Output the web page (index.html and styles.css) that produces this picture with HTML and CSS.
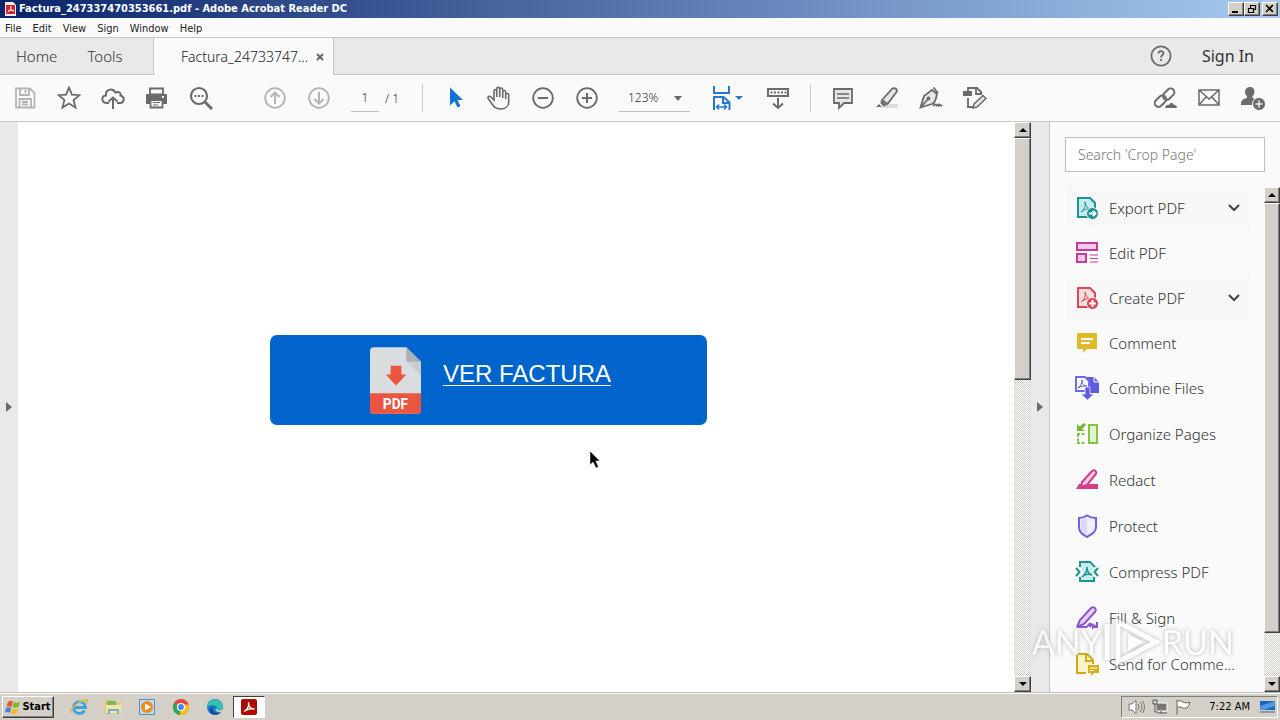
FILE: index.html
```
<!DOCTYPE html>
<html lang="en">
<head>
    <meta charset="UTF-8">
    <meta name="viewport" content="width=device-width, initial-scale=1.0">
    <title>Factura_247337470353661.pdf - Adobe Acrobat Reader DC</title>
    <link rel="stylesheet" href="styles.css">
</head>
<body>
    <header class="title-bar">
        <svg class="app-icon" width="11" height="14" viewBox="0 0 11 14"><path d="M0 0h8l3 3v11H0z" fill="#f4f0f0"/><path d="M1 3h9v9H1z" fill="#e02020"/><path d="M5.500 4c1 2-1 5-3 6.500M5.500 5c0 2 2 4 3.500 4M3 9c2-1 4-1 6 0" stroke="#fff" fill="none"/></svg>
        <h1>Factura_247337470353661.pdf - Adobe Acrobat Reader DC</h1>
        <div class="window-buttons">
            <button aria-label="Minimize"><svg width="10" height="10"><path d="M1 8h6" stroke="#000" stroke-width="2"/></svg></button>
            <button aria-label="Restore"><svg width="10" height="10"><path d="M3 1.500h6M3.500 1v3M8.500 1v5M7 5.500h2M1 4.500h6M1.500 4v5M6.500 4v5M1 8.500h6" stroke="#000" stroke-width="1.200"/></svg></button>
            <button class="close" aria-label="Close"><svg width="10" height="10"><path d="M1 1l7 7M8 1l-7 7" stroke="#000" stroke-width="1.600"/></svg></button>
        </div>
    </header>

    <nav class="menu-bar">
        <a href="#">File</a>
        <a href="#">Edit</a>
        <a href="#">View</a>
        <a href="#">Sign</a>
        <a href="#">Window</a>
        <a href="#">Help</a>
    </nav>

    <div class="tab-bar">
        <div class="tabs-left">
            <a href="#">Home</a>
            <a href="#">Tools</a>
        </div>
        <div class="tab-active">
            <span>Factura_24733747...</span>
            <button aria-label="Close tab"><svg width="8" height="8"><path d="M1 1l6 6M7 1l-6 6" stroke="#666" stroke-width="2"/></svg></button>
        </div>
        <div class="tabs-right">
            <button class="help" aria-label="Help"><svg width="22" height="22" viewBox="0 0 22 22" fill="none" stroke="#6b6b6b" stroke-width="1.800"><circle cx="11" cy="11" r="9.600"/><path d="M8.500 8.500c.2-3 5-3 5-.2 0 2-2.500 2-2.500 4.200M11 14v2"/></svg></button>
            <a href="#">Sign In</a>
        </div>
    </div>

    <div class="toolbar">
        <div class="group">
            <button aria-label="Save"><svg class="dim" viewBox="0 0 24 24"><path d="M3 2.500h14l4.500 4.500v14.500H3z"/><path d="M7 3v6h9V3M12.500 4v3M6.500 21v-8h11.500v8M9 16h6M9 18.500h6"/></svg></button>
            <button aria-label="Star"><svg viewBox="0 0 24 24"><path d="M12 1.500l2.900 7.200 7.600.5-5.900 4.900 1.900 7.500-6.500-4.100-6.500 4.100 1.900-7.500L1.500 9.200l7.600-.5z"/></svg></button>
            <button aria-label="Upload"><svg viewBox="0 0 24 24"><path stroke-width="2" d="M8 17H6c-6 0-6-7-1-7.500C4 4 11 1 14.500 6.500 18 5 20 7 19.500 9.500 24.500 11 23 17 19 17h-3M12 23V12M7.500 15.500L12 11.500l4.500 4"/></svg></button>
            <button aria-label="Print"><svg viewBox="0 0 24 24"><path d="M5 2.500h13v6H5z" fill="#fafafa"/><path d="M2 8h19q1 0 1 1v9h-4v-4H5v4H1V9q0-1 1-1z" fill="#6b6b6b" stroke="none"/><path d="M5.500 14h12v7.500h-12z" fill="#fafafa"/><path d="M8 16.500h7M8 19h5" stroke-width="1.200"/><path d="M17 11h2" stroke="#fff"/></svg></button>
            <button aria-label="Find"><svg viewBox="0 0 24 24"><circle cx="10" cy="10" r="8" stroke-width="2.200"/><path d="M16 16l7 7" stroke-width="3"/><path d="M5.500 10h9" stroke-width="2" stroke-dasharray="2 1.500"/></svg></button>
        </div>
        <div class="group paging">
            <button aria-label="Previous page"><svg class="dim" viewBox="0 0 24 24"><circle cx="12" cy="12" r="9.800"/><path d="M12 18V7M7.500 11L12 6.500l4.500 4.500" stroke-width="2"/></svg></button>
            <button aria-label="Next page"><svg class="dim" viewBox="0 0 24 24"><circle cx="12" cy="12" r="9.800"/><path d="M12 6v11M7.500 13l4.500 4.500 4.500-4.500" stroke-width="2"/></svg></button>
        </div>
        <div class="page-number">
            <input id="page" type="text" value="1">
            <label for="page">/ 1</label>
        </div>
        <div class="separator"></div>
        <div class="group">
            <button aria-label="Select"><svg viewBox="0 0 24 24"><path d="M7 1.500v18l4.500-4.200 3 6.200 3-1.500-3-6H20z" fill="#1473d2" stroke="none"/></svg></button>
            <button aria-label="Hand"><svg viewBox="0 0 24 24"><path d="M7 14V5c0-2 2.700-2 2.700 0v6V3c0-2.200 3-2.200 3 0v8-7.500c0-2 3-2 3 0V12 6c0-2 3-2 3 0v7-4c0-2 3-2 3 0v7c0 4-3 7-8 7-5.700 0-7.700-3.500-9.700-6.500L1.500 13c-1.500-2.500 1-3.500 2.500-2z" stroke-width="1.600"/></svg></button>
            <button aria-label="Zoom out"><svg viewBox="0 0 24 24"><circle cx="12" cy="12" r="9.800"/><path d="M7 12h10" stroke-width="2"/></svg></button>
            <button aria-label="Zoom in"><svg viewBox="0 0 24 24"><circle cx="12" cy="12" r="9.800"/><path d="M7 12h10M12 7v10" stroke-width="2"/></svg></button>
        </div>
        <div class="zoom-box">
            <select aria-label="Zoom level">
                <option>123%</option>
            </select>
        </div>
        <button class="fit" aria-label="Fit width"><svg class="blue" viewBox="0 0 24 24"><path stroke-width="2" d="M4 0v7h15V0M4 24V11h9.500l6 5.500V24M13 11v6h6"/><path d="M6.500 21h10M9 18.500L6.500 21 9 23.500M14 18.500l2.500 2.500-2.500 2.500" stroke-width="1.500"/></svg><span class="caret"></span></button>
        <button aria-label="Reading mode"><svg viewBox="0 0 24 24"><path d="M2 3h20v7H2zM12 12v10M7 17.500l5 4.500 5-4.500" stroke-width="2"/><path d="M4.500 6.500h16" stroke-dasharray="2 1.500"/></svg></button>
        <div class="separator"></div>
        <div class="group">
            <button aria-label="Comment"><svg viewBox="0 0 24 24"><path d="M3 3h18v14h-8l-5 5v-5H3z" fill="#e6e6e6"/><path d="M6 8h12M6 12h12" stroke-width="1.300"/></svg></button>
            <button aria-label="Highlight"><svg viewBox="0 0 24 24"><path d="M8 18h15v4H6z" fill="#ddd" stroke="none"/><path d="M7 14L17 3c2.500-2 6 0 4.500 3l-9 12z" fill="#e6e6e6"/><path d="M6 14l6 5-3 1.500-3.500-3zM4 18l3 3H1z" fill="#6b6b6b" stroke="none"/></svg></button>
            <button aria-label="Sign"><svg viewBox="0 0 24 24"><path d="M14.500 1.500L19 7M13 4L5 10 1.500 21.500 13 18c4-2 4-6 5-10zM2 21l7-8" fill="#e6e6e6"/><circle cx="9.500" cy="12.500" r="1"/><path d="M14 20c3-4 3 1 4-1s1 3 2 0c1-2 1 2 3 0"/></svg></button>
            <button aria-label="Edit"><svg viewBox="0 0 24 24"><path d="M5 5V2h9l5 5M13 2v6h6M5 12v9h5"/><path d="M0 5h9v5H0z" fill="#6b6b6b" stroke="none"/><path d="M10 22l1-4L20 9.500l3 3L14 21z" fill="#e6e6e6" stroke-width="1.500"/></svg></button>
        </div>
        <div class="group share">
            <button aria-label="Share link"><svg viewBox="0 0 24 24"><rect x="9" y="4.500" width="13" height="7.500" rx="3.700" transform="rotate(-45 15.500 8)" stroke-width="2"/><rect x="1" y="11" width="13" height="7.500" rx="3.700" transform="rotate(-45 8 15)" stroke-width="2"/><path d="M12 22.500c-1-4 3-4 4-4 2-4 5-1 5 0 4 0 4 4 2 4z" fill="#6b6b6b" stroke="#fafafa" stroke-width="1"/></svg></button>
            <button aria-label="Email"><svg viewBox="0 0 24 24"><path d="M2 4h20v15H2zM2 4l10 9L22 4M2 19l7-8M22 19l-7-8" stroke-width="1.500"/></svg></button>
            <button aria-label="Add person"><svg viewBox="0 0 24 24"><path d="M9 1c6 0 5 8 2.500 9v2c2 1 5 1 6 5v2H0c0-6 3-6 6-7v-2C3 8 3 1 9 1z" fill="#6b6b6b" stroke="none"/><circle cx="18" cy="18" r="6.500" fill="#6b6b6b" stroke="#fafafa" stroke-width="1"/><path d="M14.500 18h7M18 14.500v7" stroke="#eee" stroke-width="1.500"/></svg></button>
        </div>
    </div>

    <main class="workspace">
        <button class="side-strip" aria-label="Show navigation pane"><span class="arrow"></span></button>
        <section class="document">
            <a class="invoice-btn" href="#">
                <svg width="51" height="67" viewBox="0 0 52 68"><path d="M4 0h33l15 15v49q0 4-4 4H4q-4 0-4-4V4q0-4 4-4z" fill="#dadde0"/><path d="M37 15h15v14z" fill="#c9cdd2"/><path d="M37 0l15 15H40q-3 0-3-3z" fill="#a9b0b8"/><path d="M0 47h52v17q0 4-4 4H4q-4 0-4-4z" fill="#ea5640"/><path d="M21 19h11v9h5L26.500 39 16 28h5z" fill="#ee553d"/><text class="pdf-label" x="26" y="63" text-anchor="middle">PDF</text></svg>
                <span>VER FACTURA</span>
            </a>
            <svg class="cursor" width="12" height="19" viewBox="0 0 12 19"><path d="M1 1v14l3-3 3 6 2.500-1-2.700-6H11z" fill="#000" stroke="#fff" stroke-width=".5"/></svg>
        </section>
        <div class="scrollbar">
            <button aria-label="Scroll up"><span class="up"></span></button>
            <div class="track"><div class="thumb doc-thumb"></div></div>
            <button aria-label="Scroll down"><span class="down"></span></button>
        </div>
        <button class="side-strip" aria-label="Hide tools pane"><span class="arrow"></span></button>
        <aside class="tools-pane">
            <div class="search">
                <input type="text" placeholder="Search 'Crop Page'" aria-label="Search tools">
            </div>
            <div class="tools-body">
                <ul class="tools">
                    <li class="short shaded"><a href="#"><svg viewBox="0 0 24 24" stroke="#1c9490"><path d="M3 2h12l5 5v14H3z" fill="#c5ecee"/><path d="M6 16c3-2 5-6 4-10 1 5 3 7 7 7-4-1-7 0-11 3" stroke-width="1"/><circle cx="17.500" cy="17.500" r="6" fill="#1c9490" stroke="#fafafa" stroke-width="1"/><path d="M14 17.500h6M18 15l2.500 2.500L18 20" stroke="#fff"/></svg><span>Export PDF</span></a><svg class="chevron" viewBox="0 0 12 8"><path d="M1 1l5 5 5-5"/></svg></li>
                    <li class="short"><a href="#"><svg viewBox="0 0 24 24" stroke="#c83c96"><path d="M2 2h20v7H2zM2 13h9v8H2z" fill="#f8c8ea"/><path d="M15 14h8M15 17.500h8M15 21h8" stroke-width="1.200"/></svg><span>Edit PDF</span></a></li>
                    <li class="short shaded"><a href="#"><svg viewBox="0 0 24 24" stroke="#dc4655"><path d="M3 2h12l5 5v14H3z" fill="#fbdcdf"/><path d="M6 16c3-2 5-6 4-10 1 5 3 7 7 7-4-1-7 0-11 3" stroke-width="1"/><circle cx="17.500" cy="17.500" r="6" fill="#dc4655" stroke="#fafafa" stroke-width="1"/><path d="M14 17.500h7M17.500 14v7" stroke="#fff" stroke-width="2"/></svg><span>Create PDF</span></a><svg class="chevron" viewBox="0 0 12 8"><path d="M1 1l5 5 5-5"/></svg></li>
                    <li class="short"><a href="#"><svg viewBox="0 0 24 24"><path d="M3 2h18q1 0 1 1v14q0 1-1 1H12l-4 4v-4H3q-1 0-1-1V3q0-1 1-1z" fill="#dfb927"/><path d="M6 8h12M6 12h9" stroke="#fff"/></svg><span>Comment</span></a></li>
                    <li><a href="#"><svg viewBox="0 0 24 24"><path d="M12 1h7l5 5v11H12z" fill="#5c5ce0"/><path d="M19 1v5h5" stroke="#fafafa" stroke-width="1"/><path d="M1 1h9l4 4v10H1z" fill="#fafafa" stroke="#6c6ce4"/><path d="M3 12c3-2 4-5 4-8 0 4 2 6 5 6-3 0-6 0-9 2" stroke="#5c5ce0" stroke-width="1"/><path d="M10 11h5v7h4l-6.500 6L6 18h4z" fill="#5c5ce0" stroke="#fafafa" stroke-width=".7"/></svg><span>Combine Files</span></a></li>
                    <li><a href="#"><svg viewBox="0 0 24 24" stroke="#82c341"><path d="M14 3h8v18h-8z" fill="#e0f4d2"/><path d="M2 12h9M2 21h9M3 12v9" stroke-dasharray="3 1.500"/><path d="M2 2l2.500 2.500L9 1l2 2-4 4 3 2H2z" fill="#70b83a" stroke="none"/></svg><span>Organize Pages</span></a></li>
                    <li><a href="#"><svg viewBox="0 0 24 24" stroke="#d63c87"><path d="M1 21l3-5h19v5z" fill="#d63c87" stroke="none"/><path d="M7 14L17 3c3-2 5 1 4 3l-9 11-6 2z" fill="#f8c8ea"/></svg><span>Redact</span></a></li>
                    <li><a href="#"><svg viewBox="0 0 24 24" stroke="#6c64dc"><path d="M12 1.500c3 2 6 2.500 9 2.500v9c0 5-4 7-9 10-5-3-8-5-8-10V4c3 0 5-.5 8-2.500z" fill="#f0efff"/><path d="M6 5.500l6-2v17c-4-2-6-4-6-7z" fill="#dcd9fb" stroke="none"/></svg><span>Protect</span></a></li>
                    <li><a href="#"><svg viewBox="0 0 24 24" stroke="#1c9490"><path d="M6 3h8l5 5-2 4 2 4v5H6v-5l2-4-2-5z" fill="#c5ecee" stroke="none"/><path d="M5 7V2h10l5 5M5 17v4h14v-4M1 8l3.500 4L1 16M23 8l-3.500 4 3.500 4"/><path d="M7 17c3-2 5-6 5-10 0 5 2 7 5 8-3-1-7-1-10 2" stroke-width="1.500"/></svg><span>Compress PDF</span></a></li>
                    <li><a href="#"><svg viewBox="0 0 24 24" stroke="#8b55cd"><path d="M2 21l3-7L16 2c3-2 6 1 4 4L9 18l-7 3h10" fill="#e9d2fa"/><path d="M12 21c4-6 4-3 3 0 3-5 3-2 3 0 2-3 2-1 2 0h2v-5"/></svg><span>Fill &amp; Sign</span></a></li>
                    <li><a href="#"><svg viewBox="0 0 24 24" stroke="#d2aa14"><path d="M11 21H2V2h10l6 6v4" fill="#faf2c8"/><path d="M11 2v7h7"/><path d="M13 13h11v8h-5l-3 3v-3h-3z" fill="#dab018" stroke="none"/><path d="M15 16h7M15 18.500h4" stroke="#fff" stroke-width="1"/></svg><span>Send for Comme...</span></a></li>
                </ul>
                <div class="scrollbar pane-scroll">
                    <button aria-label="Scroll up"><span class="up"></span></button>
                    <div class="track"><div class="thumb pane-thumb"></div></div>
                    <button aria-label="Scroll down"><span class="down"></span></button>
                </div>
            </div>
        </aside>
        <div class="watermark">
            <span>ANY</span>
            <svg width="56" height="48" viewBox="0 0 56 48" fill="none" stroke="#fff" stroke-width="5"><path d="M3 6v36M14 4v40l38-20z"/><path d="M24 16v17l16-9z" fill="#fff" stroke="none"/></svg>
            <span>RUN</span>
        </div>
    </main>

    <footer class="taskbar">
        <button class="start"><svg width="16" height="16" viewBox="0 0 16 16"><path d="M3 3q3-2 5-.5L6.500 8Q4 6.500 1.500 8z" fill="#e8562a"/><path d="M9 3q3 1.500 6-.5L13.500 8q-3 1.500-6 0z" fill="#7cb82f"/><path d="M1 9q3-1.500 5 0L5 14q-2-1.500-5-.5z" fill="#3a86d4"/><path d="M7 9.500q3 1.500 6 0L12 14q-3 2-6 .5z" fill="#f5b92b"/></svg>Start</button>
        <div class="pinned">
            <button aria-label="Internet Explorer"><svg viewBox="0 0 18 18" fill="none"><path d="M14.500 12.500c-3 5-11 3-11-3 0-7 11-8 12 0H5" stroke="#35a5e0" stroke-width="2.800"/><path d="M1 15C0 10 10 2 17 2c1 1 0 3-1 4" stroke="#e2b53b" stroke-width="1.300"/></svg></button>
            <button aria-label="Explorer"><svg viewBox="0 0 18 18"><path d="M1 2h7l1 2h8v12H1z" fill="#e8c865"/><path d="M3 3h9v5H3z" fill="#75b96a"/><path d="M2 7h15v8H2z" fill="#f7e6a0"/><path d="M4 16v-5h11v5h-2v-3H6v3z" fill="#69b2dc"/></svg></button>
            <button aria-label="Media Player"><svg viewBox="0 0 18 18"><path d="M1.500 1.500h15v15h-15z" fill="#b9dff6" stroke="#4d92ca"/><circle cx="9" cy="9" r="6" fill="#f28a18"/><path d="M7 5.500v7l6-3.500z" fill="#fff"/></svg></button>
            <button aria-label="Chrome"><svg viewBox="0 0 18 18"><circle cx="9" cy="9" r="8" fill="#e84435"/><path d="M9 9L2 5a8 8 0 0 0 6 12z" fill="#2da94f"/><path d="M9 9l-1 8a8 8 0 0 0 8.500-10.500H9z" fill="#fbc116"/><circle cx="9" cy="9" r="3.500" fill="#4285f4" stroke="#fff" stroke-width="1.200"/></svg></button>
            <button aria-label="Edge"><svg viewBox="0 0 18 18"><circle cx="9" cy="9" r="8" fill="#1878ce"/><path d="M1 9C1 0 16-2 17 9c0 3-4 4-6 2 1-4-6-5-10-2z" fill="#35c1b1"/><path d="M7 9c-2 6 4 7 8 5-4 5-13 2-11-3z" fill="#124c96"/><path d="M10 11c1 3 5 3 7 1" stroke="#d4d0c8" fill="none" stroke-width="2"/></svg></button>
            <button class="running" aria-label="Acrobat Reader"><svg viewBox="0 0 18 18"><rect x="1" y="1" width="16" height="16" rx="2" fill="#ae0c00"/><path d="M4 13.500c4-2 5-6 4.500-9.500 0 4 2 7 6 7-4-1-7 0-10.500 2.500" fill="none" stroke="#fff" stroke-width="1.300"/></svg></button>
        </div>
        <div class="tray">
            <svg width="18" height="16" viewBox="0 0 18 16" fill="none" stroke="#777"><path d="M1 5h3l4-4v14l-4-4H1z" fill="#fff"/><path d="M10 5q2 3 0 6M12 3q4 5 0 10M14.500 2q4 6 0 12"/></svg>
            <svg width="16" height="16" viewBox="0 0 16 16"><path d="M4 4h11v8H4z" fill="#777" stroke="#fff"/><path d="M6 14h9M9 12v2M1 1h4v4H1zM3 5v8h3" fill="none" stroke="#555"/></svg>
            <svg width="18" height="16" viewBox="0 0 18 16"><path d="M3 1v15M3 2q4-1 6 1 3 2 7 0-1 4-3 6-4 1-6-1H3" fill="#fff" stroke="#666"/></svg>
            <time>7:22 AM</time>
            <svg class="show-desktop" width="16" height="14" viewBox="0 0 16 14"><path d="M1 1h15v9H1z" fill="#1766c0"/><path d="M1 6l15-5v5L5 10H1z" fill="#5299e2"/><path d="M1 12h15" stroke="#4c6279"/></svg>
        </div>
    </footer>
</body>
</html>
```
FILE: styles.css
```
* { margin: 0; padding: 0; box-sizing: border-box; }
body { display: flex; flex-direction: column; height: 100vh; overflow: hidden; background: #fafafa; color: #333; font-family: "Noto Sans", sans-serif; font-size: 15px; font-weight: 300; }
a { color: inherit; text-decoration: none; }
button, input, select { font: inherit; color: inherit; border: none; background: none; }
button { display: flex; align-items: center; justify-content: center; }
svg { display: block; flex: none; }

.title-bar { display: flex; align-items: center; height: 18px; padding: 0 2px 0 5px; gap: 3px; background: linear-gradient(to right, #0a246a, #a6caf0); flex: none; }
.title-bar h1 { flex: 1; color: #fff; font-family: "DejaVu Sans Condensed", "DejaVu Sans", sans-serif; font-size: 11px; line-height: 16px; font-weight: bold; }
.window-buttons { display: flex; }
.window-buttons button { width: 16px; height: 14px; }
.window-buttons .close { margin-left: 2px; }
.window-buttons button, .scrollbar button, .thumb, .start { background: #d4d0c8; border: 1px solid; border-color: #fff #404040 #404040 #fff; box-shadow: inset -1px -1px #808080; }

.menu-bar { display: flex; align-items: center; gap: 11px; height: 20px; padding: 1px 5px 0; border-bottom: 1px solid #c8c8c8; font-family: "DejaVu Sans Condensed", sans-serif; font-size: 11px; font-weight: normal; color: #222; flex: none; }

.tab-bar { display: flex; height: 37px; background: #e9e9e9; flex: none; }
.tabs-left { display: flex; align-items: center; gap: 30px; width: 154px; padding-left: 16px; border-right: 1px solid #c8c8c8; border-bottom: 1px solid #c8c8c8; }
.tab-active { display: flex; align-items: center; justify-content: space-between; width: 180px; padding: 0 9px 0 27px; background: #fafafa; border-right: 1px solid #c8c8c8; font-size: 14px; color: #222; }
.tabs-right { display: flex; align-items: center; justify-content: flex-end; flex: 1; gap: 30px; padding-right: 26px; border-bottom: 1px solid #c8c8c8; font-size: 17px; font-weight: 400; }
.tabs-right a { font-size: 16px; }

.toolbar { display: flex; align-items: center; gap: 20px; height: 47px; padding: 0 15px 0 13px; border-bottom: 1px solid #c8c8c8; flex: none; }
.toolbar svg { width: 24px; height: 24px; fill: none; stroke: #6b6b6b; stroke-width: 1.8; }
.toolbar .dim { stroke: #b4b4b4; }
.toolbar .blue { stroke: #2878d2; }
.group { display: flex; gap: 20px; }
.paging { margin-left: 30px; }
.share { margin-left: auto; }
.page-number { display: flex; align-items: center; gap: 6px; width: 51px; font-size: 12px; }
.page-number input { width: 28px; height: 27px; text-align: center; border-bottom: 1px solid #c0c0c0; }
.page-number label { white-space: nowrap; }
.separator { width: 1px; height: 28px; background: #c8c8c8; }
.zoom-box { position: relative; width: 71px; }
.zoom-box select { width: 100%; height: 27px; padding-left: 9px; font-size: 12px; appearance: none; border-bottom: 1px solid #c0c0c0; }
.zoom-box::after { content: ""; position: absolute; right: 8px; top: 11px; border: 4px solid transparent; border-top: 5px solid #6b6b6b; border-bottom: none; pointer-events: none; }
.fit { width: 36px; justify-content: space-between; }
.caret { border: 4px solid transparent; border-top: 4px solid #2878d2; border-bottom: none; margin-right: 3px; }

.workspace { display: flex; flex: 1; min-height: 0; position: relative; }
.side-strip { width: 18px; background: #e9e9e9; flex: none; }
.arrow { border: 5px solid transparent; border-left: 6px solid #6b6b6b; border-right: none; }
.document { display: flex; justify-content: center; align-items: flex-start; flex: 1; padding: 213px 55px 0 0; background: #fff; position: relative; }
.invoice-btn { display: flex; align-items: center; justify-content: center; gap: 22px; width: 437px; height: 90px; padding-left: 4px; border-radius: 7px; background: #0064cd; color: #fff; font: 24px/28px "Liberation Sans", sans-serif; }
.invoice-btn span { text-decoration: underline; text-decoration-thickness: 1px; text-underline-offset: 3px; padding-bottom: 12px; }
.pdf-label { fill: #fff; font: bold 14px "Roboto", sans-serif; }
.cursor { position: absolute; left: 571px; top: 328px; }

.scrollbar { display: flex; flex-direction: column; width: 17px; flex: none; }
.scrollbar button { width: 100%; height: 16px; flex: none; }
.track { flex: 1; background: repeating-conic-gradient(#fff 0 25%, #d4d0c8 0 50%) 0 0 / 2px 2px; }
.doc-thumb { height: 45%; }
.pane-thumb { height: 91%; }
.up { border: 4px solid transparent; border-bottom: 4px solid #000; border-top: none; }
.down { border: 4px solid transparent; border-top: 4px solid #000; border-bottom: none; }

.tools-pane { display: flex; flex-direction: column; width: 231px; border-left: 1px solid #c8c8c8; flex: none; }
.search { padding: 15px 15px 13px; }
.search input { display: block; width: 100%; height: 35px; padding: 0 12px; background: #fff; border: 1px solid #c0c0c0; font-size: 14px; }
.search input::placeholder { color: #777; }
.tools-body { display: flex; flex: 1; min-height: 0; }
.tools { flex: 1; min-width: 0; padding: 0 15px; list-style: none; }
.tools li { display: flex; align-items: center; justify-content: space-between; height: 46px; padding: 0 9px 0 10px; }
.tools .short { height: 45px; }
.tools .shaded { background: #f8f8f8; }
.tools a { display: flex; align-items: center; gap: 10px; white-space: nowrap; }
.tools svg { width: 24px; height: 24px; fill: none; stroke-width: 2; }
.tools .chevron { width: 12px; height: 8px; stroke: #444; }
.pane-scroll { width: 16px; margin-top: 2px; }

.watermark { display: flex; align-items: center; gap: 2px; position: absolute; right: 46px; bottom: 26px; color: #fff; font: 34px/48px "Lato", sans-serif; opacity: .7; filter: drop-shadow(0 0 2px #999); pointer-events: none; }

.taskbar { display: flex; align-items: center; height: 28px; padding: 0 2px; background: #d4d0c8; border-top: 1px solid #c0bcb4; box-shadow: inset 0 1px #fff; flex: none; }
.start { width: 52px; height: 22px; gap: 1px; font-family: "DejaVu Sans Condensed", sans-serif; font-size: 11px; font-weight: bold; color: #000; }
.pinned { display: flex; gap: 2px; margin-left: 9px; }
.pinned button { width: 32px; height: 22px; }
.pinned svg { width: 18px; height: 18px; }
.pinned .running { background: #fff; border: 1px solid; border-color: #404040 #fff #fff #404040; }
.tray { display: flex; align-items: center; gap: 6px; width: 157px; height: 22px; margin-left: auto; padding: 0 2px 0 6px; border: 1px solid; border-color: #808080 #fff #fff #808080; color: #000; font-family: "DejaVu Sans Condensed", sans-serif; font-size: 11px; font-weight: normal; }
.tray time { margin-left: auto; white-space: nowrap; }
.show-desktop { margin-left: 3px; }
```
